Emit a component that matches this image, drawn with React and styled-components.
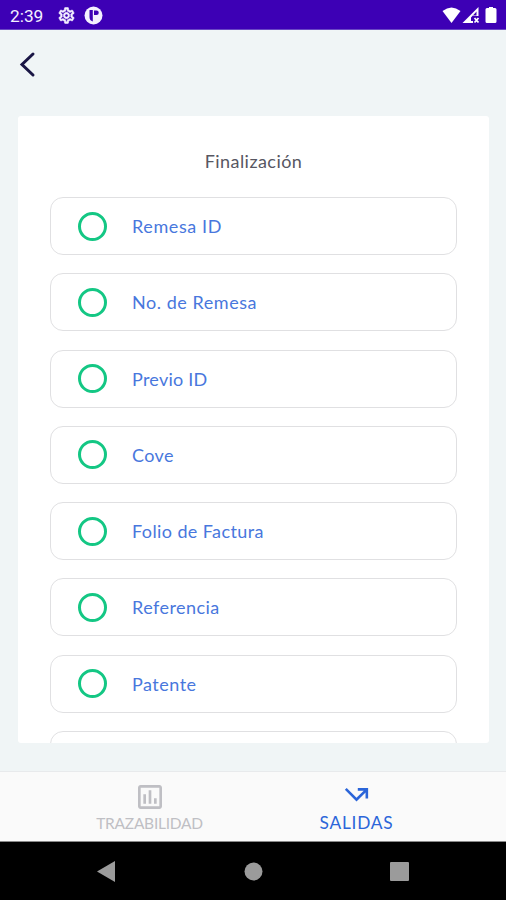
import React from 'react';
import styled, {createGlobalStyle} from 'styled-components';
import {MdOutlineSettings, MdOutlineAssessment, MdCallMissedOutgoing} from 'react-icons/md';

const GlobalStyle = createGlobalStyle`
  * {
    box-sizing: border-box;
  }
  body {
    margin: 0;
    overflow: hidden;
    font-family: Lato, 'Open Sans', sans-serif;
  }
`;
const Screen = styled.div`
  width: 506px;
  height: 900px;
  display: flex;
  flex-direction: column;
  background: #f0f5f6;
`;
const StatusBar = styled.div`
  height: 30px;
  display: flex;
  align-items: center;
  justify-content: space-between;
  padding: 2px 8px 0 10px;
  background: #3d00b5;
  border-bottom: 1px solid #6a48c4;
  color: #f4f0ff;
`;
const StatusGroup = styled.div`
  display: flex;
  align-items: center;
`;
const Clock = styled.span`
  width: 47px;
  font-family: Roboto, sans-serif;
  font-size: 17.3px;
`;
const Notifications = styled.div`
  display: flex;
  align-items: center;
  gap: 8px;
`;
const GearIcon = styled(MdOutlineSettings)`
  path:not([fill='none']) {
    stroke-width: 0.7px;
  }
`;
const Header = styled.header`
  height: 86px;
  padding: 20px 0 0 18px;
`;
const BackButton = styled.button`
  display: block;
  padding: 0;
  border: 0;
  background: none;
`;
const Card = styled.main`
  height: 627px;
  margin: 0 17px 28px 18px;
  padding: 33px 32px 0;
  overflow: hidden;
  border-radius: 3px;
  background: #fff;
`;
const Title = styled.h1`
  margin: 0 0 24px;
  text-align: center;
  font-size: 18px;
  font-weight: 400;
  line-height: 24px;
  letter-spacing: 0.45px;
  color: #575762;
`;
const List = styled.div`
  display: flex;
  flex-direction: column;
  gap: 18.3px;
`;
const Option = styled.div`
  flex: none;
  height: 58px;
  display: flex;
  align-items: center;
  padding-left: 27px;
  border: 1px solid #e0e0e2;
  border-radius: 13px;
`;
const Radio = styled.span`
  width: 29px;
  height: 29px;
  margin-right: 25px;
  border: 3px solid #14c784;
  border-radius: 50%;
`;
const Label = styled.span`
  font-size: 18px;
  line-height: 24px;
  letter-spacing: ${(props) => props.$spacing}px;
  color: #4877dd;
`;
const TabBar = styled.nav`
  height: 71px;
  display: flex;
  justify-content: center;
  border-top: 1px solid #e8eaec;
  border-bottom: 1px solid #8a8a8a;
  background: #fafafa;
`;
const Tab = styled.div`
  width: 207px;
  display: flex;
  flex-direction: column;
  align-items: center;
  padding-top: ${(props) => (props.$active ? 7 : 9)}px;
  color: ${(props) => (props.$active ? '#2b65d9' : '#bfbfc4')};
`;
const TabLabel = styled.span`
  margin-top: ${(props) => props.$offset || 0}px;
  font-size: ${(props) => props.$size}px;
  line-height: 20px;
  letter-spacing: ${(props) => props.$spacing}px;
`;
const NavBar = styled.div`
  flex: 1;
  display: flex;
  justify-content: space-between;
  padding: 19px 97px 0;
  background: #000;
`;

const options = [
  {name: 'Remesa ID', spacing: 0.6},
  {name: 'No. de Remesa', spacing: 0.55},
  {name: 'Previo ID', spacing: 0.25},
  {name: 'Cove', spacing: 0.4},
  {name: 'Folio de Factura', spacing: 0.4},
  {name: 'Referencia', spacing: 0.45},
  {name: 'Patente', spacing: 0.5},
  {name: '', spacing: 0},
];

const AppBadge = () => (
  <svg width="19" height="19" viewBox="0 0 19 19">
    <circle cx="9.5" cy="9.5" r="9" fill="#f4f0ff" />
    <path d="M5.5 4h3.300v11.500Q5.500 14.500 5.500 11z" fill="#3d00b5" />
    <path d="M10 4.500h2.500a2 2 0 0 1 0 4.500H10z" fill="#3d00b5" />
  </svg>
);

const DeviceStatus = () => (
  <svg width="56" height="20" viewBox="0 0 56 20" fill="#fff">
    <path d="M0.5 5Q9.5-2 18.5 5L9.5 17z" />
    <path fillRule="evenodd" d="M20.5 17L36.5 1V10H31V17zM31 15V9.500H34.500V5.500L29 11.500V15z" />
    <path d="M32.500 12l4 4.500M36.500 12l-4 4.500" stroke="#fff" strokeWidth="1.800" />
    <path d="M47 2V1h4v1h2q1.500 0 1.500 1.500v12q0 1.500-1.500 1.500h-8q-1.500 0-1.500-1.500v-12Q43.500 2 45 2z" />
  </svg>
);

const App = () => {
  return (
    <Screen>
      <GlobalStyle />
      <StatusBar>
        <StatusGroup>
          <Clock>2:39</Clock>
          <Notifications>
            <GearIcon size={19} />
            <AppBadge />
          </Notifications>
        </StatusGroup>
        <DeviceStatus />
      </StatusBar>
      <Header>
        <BackButton aria-label="Volver">
          <svg width="20" height="28" viewBox="0 0 20 28" fill="none">
            <path d="M15 4L4 14.500l11 10.500" stroke="#1a1645" strokeWidth="3" strokeLinecap="round" />
          </svg>
        </BackButton>
      </Header>
      <Card>
        <Title>Finalización</Title>
        <List>
          {options.map((option) => (
            <Option key={option.name}>
              <Radio />
              <Label $spacing={option.spacing}>{option.name}</Label>
            </Option>
          ))}
        </List>
      </Card>
      <TabBar>
        <Tab>
          <MdOutlineAssessment size={32} />
          <TabLabel $size={15.5} $spacing={-0.25}>TRAZABILIDAD</TabLabel>
        </Tab>
        <Tab $active>
          <MdCallMissedOutgoing size={31} />
          <TabLabel $size={17.3} $spacing={0.8} $offset={3}>SALIDAS</TabLabel>
        </Tab>
      </TabBar>
      <NavBar>
        <svg width="19" height="21" viewBox="0 0 19 21">
          <path d="M0 10.500L18 0v21z" fill="#9b9b9b" />
        </svg>
        <svg width="19" height="20" viewBox="0 0 19 20">
          <circle cx="9.5" cy="10.5" r="9" fill="#9b9b9b" />
        </svg>
        <svg width="19" height="21" viewBox="0 0 19 21">
          <rect y="1" width="19" height="19" rx="1" fill="#9b9b9b" />
        </svg>
      </NavBar>
    </Screen>
  );
};

export default App;
